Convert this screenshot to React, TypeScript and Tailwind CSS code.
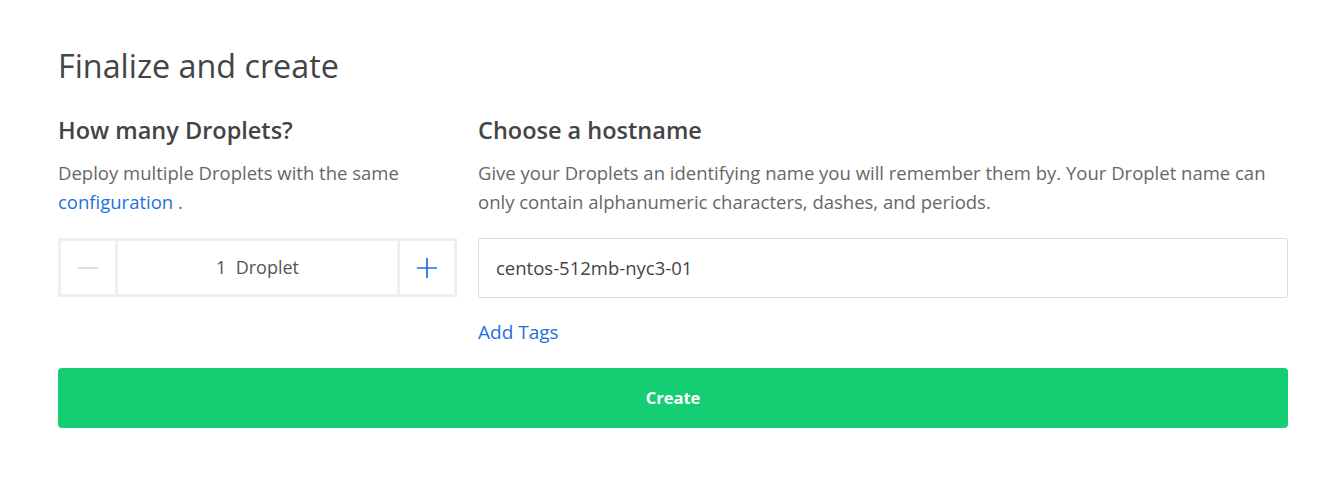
import { Minus, Plus } from 'lucide-react'

export default function App() {
  return (
    <div className="min-h-[482px] bg-white pl-[58px] pr-[38px] pt-[43px] font-['Open_Sans','Lato',sans-serif] text-[#444]">
      <h1 className="text-[32.3px] leading-[44px] font-normal">Finalize and create</h1>

      <div className="mt-[28px] flex gap-[21px]">
        <div className="w-[399px] shrink-0">
          <h2 className="text-[23.5px] leading-[30px] font-semibold">How many Droplets?</h2>
          <p className="mt-[13px] text-[18.5px] leading-[29px] text-[#676767]">
            Deploy multiple Droplets with the same{' '}
            <a className="text-[#1f6fe0]">configuration</a> .
          </p>
          <div className="mt-[22px] flex h-[59px] border-[3px] border-[#efefef]">
            <button className="flex w-[57px] items-center justify-center border-r-[3px] border-[#efefef]">
              <Minus className="h-8 w-8 text-[#d6d6d6]" strokeWidth={1.3} />
            </button>
            <div className="flex flex-1 items-center justify-center text-[18px] text-[#555]">1&nbsp; Droplet</div>
            <button className="flex w-[57px] items-center justify-center border-l-[3px] border-[#efefef]">
              <Plus className="h-8 w-8 text-[#1f6fe0]" strokeWidth={1.3} />
            </button>
          </div>
        </div>

        <div className="flex-1">
          <h2 className="text-[23.5px] leading-[30px] font-semibold">Choose a hostname</h2>
          <p className="mt-[13px] text-[18.5px] leading-[29px] text-[#676767]">
            Give your Droplets an identifying name you will remember them by. Your Droplet name can only contain
            alphanumeric characters, dashes, and periods.
          </p>
          <div className="mt-[22px] flex h-[60px] items-center rounded-[3px] border border-[#dcdcdc] px-[17px] text-[18.5px] text-[#444]">
            centos-512mb-nyc3-01
          </div>
          <a className="mt-[22px] block text-[19px] leading-[24px] text-[#1f6fe0]">Add Tags</a>
        </div>
      </div>

      <button className="mt-[24px] flex h-[60px] w-full items-center justify-center rounded-[4px] bg-[#15ce74] text-[16.5px] font-bold text-white">
        Create
      </button>
    </div>
  )
}
